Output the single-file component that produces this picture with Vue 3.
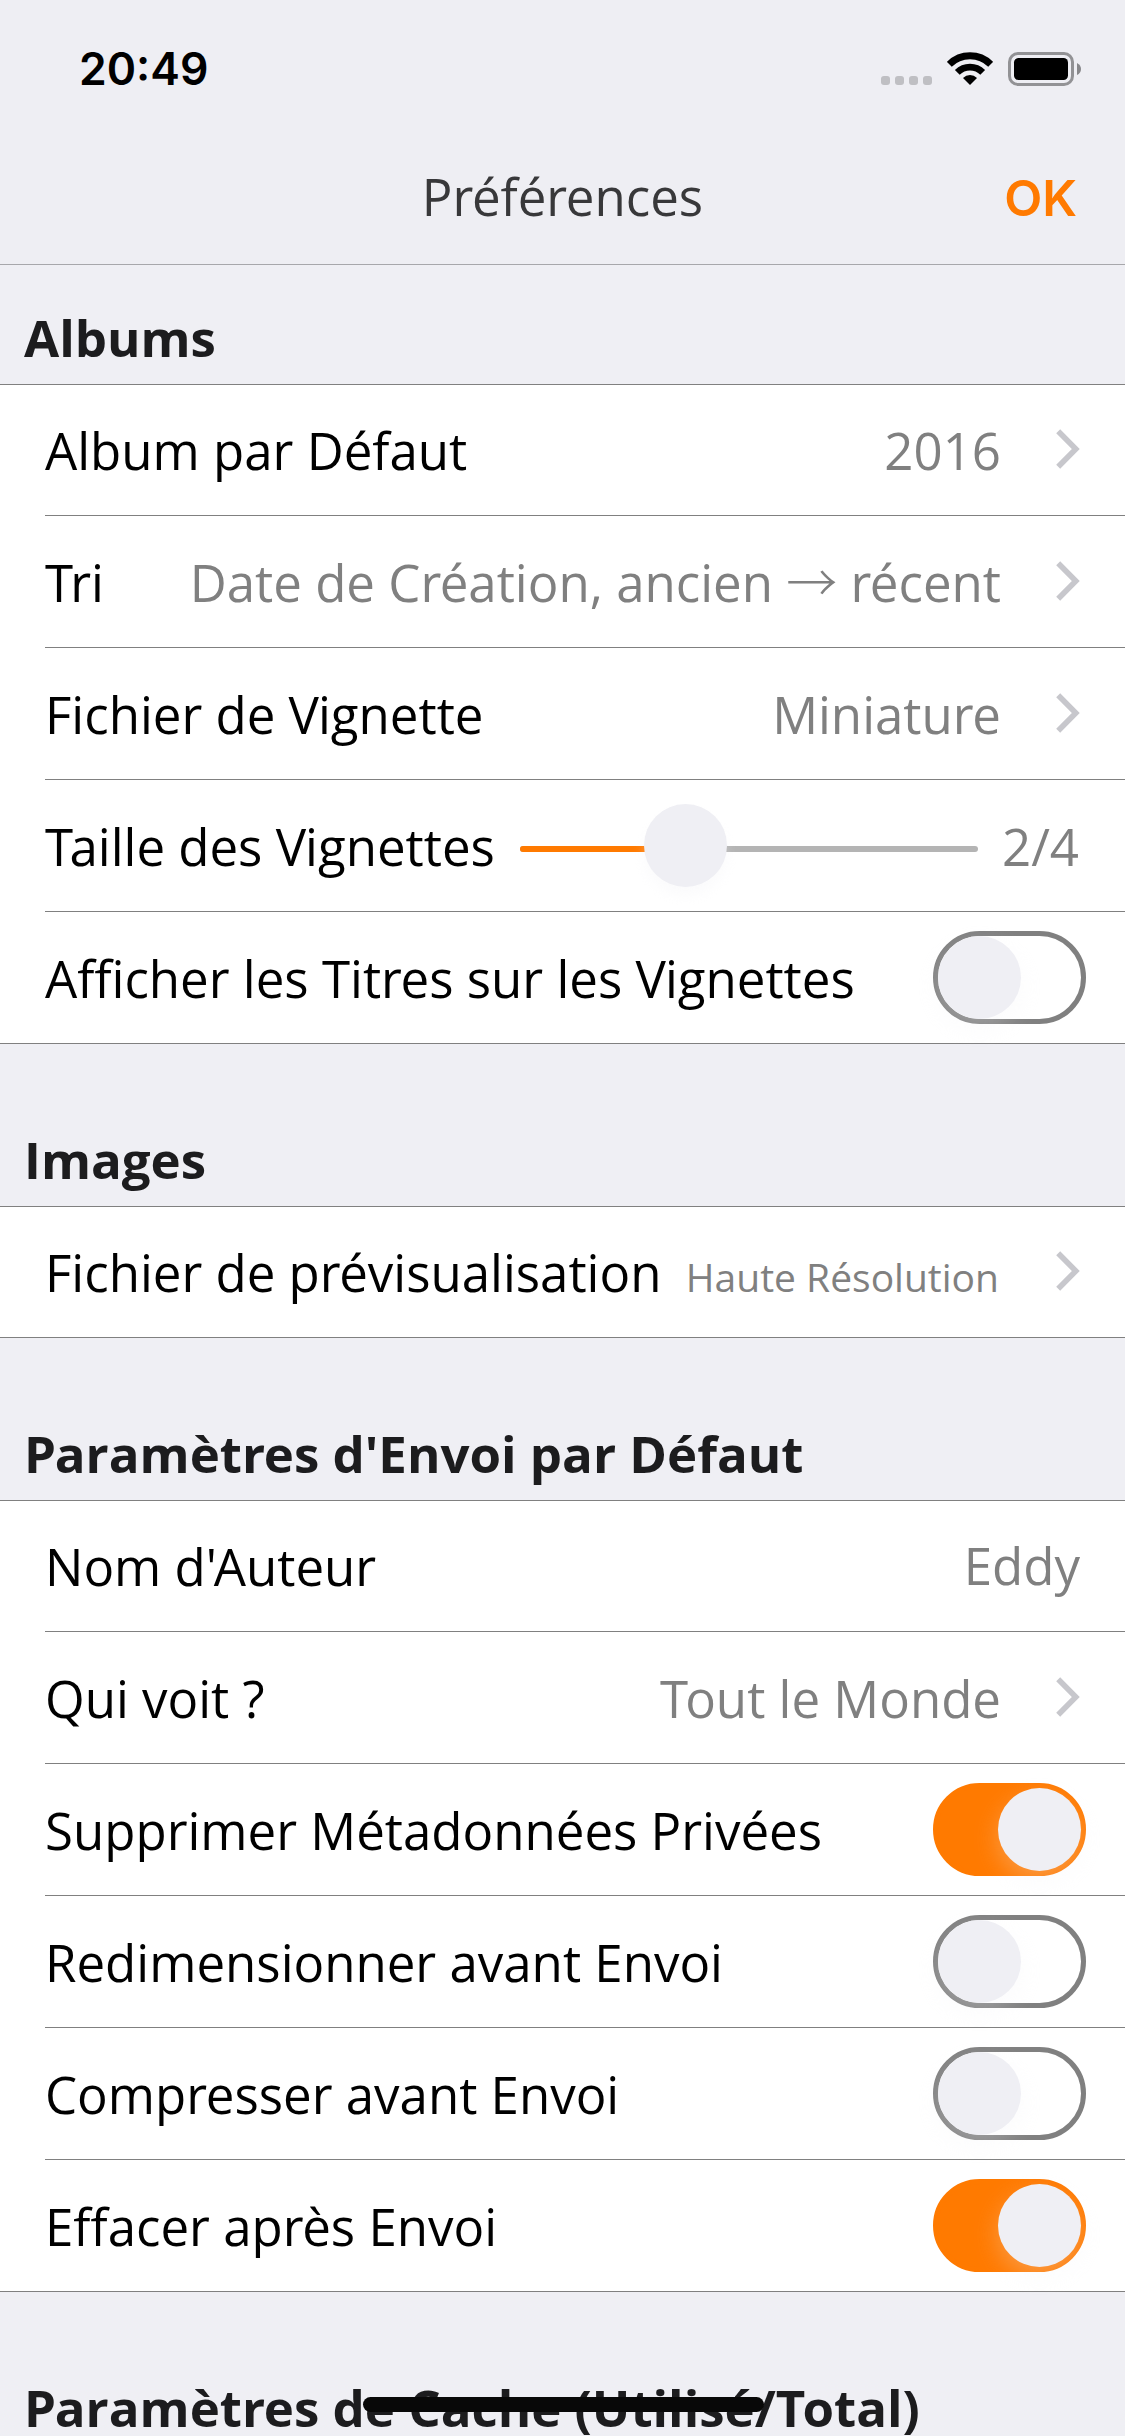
<script setup>
import { h } from 'vue'

// Extra tightening, in em, applied between the two letters of a pair.
const pairs = { Tr: -0.056, Ta: -0.072, To: -0.056, "'A": -0.064, re: -0.026, 'ré': -0.03, 'rè': -0.026, Vi: -0.02, Pa: -0.024 }
const pattern = /(T(?=[rao])|'(?=A)|r(?=[eéè])|V(?=i)|P(?=a))/

function Kerned({ text }) {
  let pos = 0
  return text.split(pattern).map((part, i) => {
    pos += part.length
    if (i % 2 === 0) return part
    return h('span', { style: { letterSpacing: pairs[part + text[pos]] + 'em' } }, part)
  })
}
Kerned.props = ['text']

const sections = [
  {
    title: 'Albums',
    rows: [
      { label: 'Album par Défaut', value: '2016', kind: 'link' },
      { label: 'Tri', value: 'Date de Création, ancien ', arrow: true, tail: ' récent', kind: 'link' },
      { label: 'Fichier de Vignette', value: 'Miniature', kind: 'link' },
      { label: 'Taille des Vignettes', value: '2/4', kind: 'slider' },
      { label: 'Afficher les Titres sur les Vignettes', kind: 'switch', on: false },
    ],
  },
  {
    title: 'Images',
    rows: [{ label: 'Fichier de prévisualisation', value: 'Haute Résolution', kind: 'link', small: true }],
  },
  {
    title: "Paramètres d'Envoi par Défaut",
    rows: [
      { label: "Nom d'Auteur", value: 'Eddy', kind: 'text' },
      { label: 'Qui voit ?', value: 'Tout le Monde', kind: 'link' },
      { label: 'Supprimer Métadonnées Privées', kind: 'switch', on: true },
      { label: 'Redimensionner avant Envoi', kind: 'switch', on: false },
      { label: 'Compresser avant Envoi', kind: 'switch', on: false },
      { label: 'Effacer après Envoi', kind: 'switch', on: true },
    ],
  },
  { title: 'Paramètres de Cache (Utilisé/Total)', rows: [] },
]
</script>

<template>
  <div class="screen">
    <header class="top">
      <div class="status">
        <span class="time">20:49</span>
        <div class="indicators">
          <div class="dots"><i v-for="n in 4" :key="n" class="dot"></i></div>
          <svg class="wifi" width="46" height="33" viewBox="0 0 46 33">
            <g fill="none" stroke="#000">
              <path d="M2.3 12.3A29.3 29.3 0 0 1 43.7 12.3" stroke-width="7" />
              <path d="M10.3 20.3A18 18 0 0 1 35.7 20.3" stroke-width="6.8" />
            </g>
            <path d="M23 33L16 26Q19 23 23 23T30 26Z" fill="#000" />
          </svg>
          <svg class="battery" width="73" height="34" viewBox="0 0 73 34">
            <rect x="1.5" y="1.5" width="63" height="31" rx="8.5" fill="none" stroke="#929295" stroke-width="3" />
            <rect x="6" y="6" width="54" height="22" rx="4.5" fill="#000" />
            <path d="M69 11Q73 13 73 17T69 23Z" fill="#88888b" />
          </svg>
        </div>
      </div>
      <nav class="nav">
        <span></span>
        <h1 class="title"><Kerned text="Préférences" /></h1>
        <button class="ok">OK</button>
      </nav>
    </header>

    <main>
      <section v-for="s in sections" :key="s.title" class="section">
        <h2 class="heading"><Kerned :text="s.title" /></h2>
        <div class="group">
          <div v-for="r in s.rows" :key="r.label" class="row">
            <span class="label"><Kerned :text="r.label" /></span>
            <div v-if="r.kind === 'slider'" class="slider">
              <div class="fill"></div>
              <div class="thumb"></div>
            </div>
            <span v-if="r.value" class="value" :class="[r.kind, { small: r.small }]"><Kerned :text="r.value" /><span v-if="r.arrow" class="arrow">→</span><Kerned v-if="r.tail" :text="r.tail" /></span>
            <svg v-if="r.kind === 'link'" class="chevron" width="24" height="40" viewBox="0 0 24 40">
              <path d="M2.2 2.2L19.8 20L2.2 37.8" fill="none" stroke="#c7c7cc" stroke-width="5.6" />
            </svg>
            <div v-if="r.kind === 'switch'" class="switch" :class="{ on: r.on }"><div class="knob"></div></div>
          </div>
        </div>
      </section>
    </main>
    <div class="home"></div>
  </div>
</template>

<style>
body {
  background: #efeff4;
  overflow: hidden;
}
</style>

<style scoped>
.screen {
  position: relative;
  width: 1125px;
  height: 2436px;
  overflow: hidden;
  background: #efeff4;
  font-family: "Open Sans", "Noto Sans", sans-serif;
  font-size: 51px;
  line-height: 70px;
  color: #000;
  white-space: pre;
}
.top {
  height: 264px;
  background: #eeeef3;
  border-bottom: 1px solid #a7a7ab;
}
.status {
  height: 132px;
  display: flex;
  justify-content: space-between;
  padding: 0 44px 0 79px;
}
.time {
  margin-top: 34px;
  font: 600 44.5px/70px Inter, sans-serif;
}
.indicators {
  display: flex;
  align-items: flex-end;
  height: 86px;
}
.dots {
  display: flex;
  gap: 5px;
  margin: 0 15px 1px 0;
}
.dot {
  width: 9px;
  height: 9px;
  border-radius: 3px;
  background: #bfbfc3;
}
.wifi {
  margin: 0 15px 1px 0;
}
.nav {
  height: 132px;
  display: grid;
  grid-template-columns: 1fr auto 1fr;
  align-items: center;
  padding: 0 48px;
}
.title {
  margin: 0;
  padding-bottom: 5px;
  font-size: 51px;
  font-weight: 400;
  color: #38383a;
}
.ok {
  justify-self: end;
  padding: 0;
  border: 0;
  background: none;
  color: #ff7a00;
  font: 600 49.5px/70px Inter, sans-serif;
}
.heading {
  box-sizing: border-box;
  height: 162px;
  margin: 0;
  padding: 80px 24px 0;
  font-size: 51px;
  font-weight: 700;
  color: #1c1c1e;
}
.section:first-child .heading {
  height: 119px;
  padding-top: 37px;
}
.group {
  border-top: 1px solid #808080;
  border-bottom: 1px solid #808080;
  background: #fff;
}
.row {
  box-sizing: border-box;
  height: 132px;
  margin-left: 45px;
  padding-right: 39px;
  display: flex;
  align-items: center;
  border-top: 1px solid #808080;
}
.row:first-child {
  height: 130px;
  border-top: 0;
}
.label {
  flex: none;
}
.value {
  margin-left: auto;
  color: #808080;
}
.value.text {
  padding: 0 6px 2px 0;
}
.value.slider {
  padding-right: 7px;
}
.value.small {
  font-size: 39px;
  padding: 9px 2px 0 0;
}
.arrow {
  font-family: "Noto Sans CJK SC", sans-serif;
  font-weight: 300;
  line-height: 0;
}
.chevron {
  margin: 0 6px 2px 55px;
}
div.slider {
  position: relative;
  flex: none;
  width: 458px;
  height: 6px;
  margin: 7px 0 0 25px;
  border-radius: 3px;
  background: #b4b4b4;
}
.fill {
  width: 140px;
  height: 6px;
  border-radius: 3px;
  background: #ff7a00;
}
.thumb {
  position: absolute;
  left: 124px;
  top: -42px;
  width: 83px;
  height: 83px;
  border-radius: 50%;
  background: #efeff4;
  box-shadow: 0 9px 12px rgba(239, 239, 244, 0.28);
}
.switch {
  box-sizing: border-box;
  flex: none;
  display: flex;
  width: 153px;
  height: 93px;
  margin-left: auto;
  border: 5px solid #808080;
  border-radius: 47px;
}
.switch.on {
  justify-content: flex-end;
  border-color: #ff7a00;
  background: #ff7a00;
}
.knob {
  width: 83px;
  height: 83px;
  border-radius: 50%;
  background: #efeff4;
  box-shadow: 0 9px 24px rgba(239, 239, 244, 0.28);
}
.home {
  position: absolute;
  left: 363px;
  top: 2397px;
  width: 401px;
  height: 15px;
  border-radius: 8px;
  background: #080808;
}
</style>
